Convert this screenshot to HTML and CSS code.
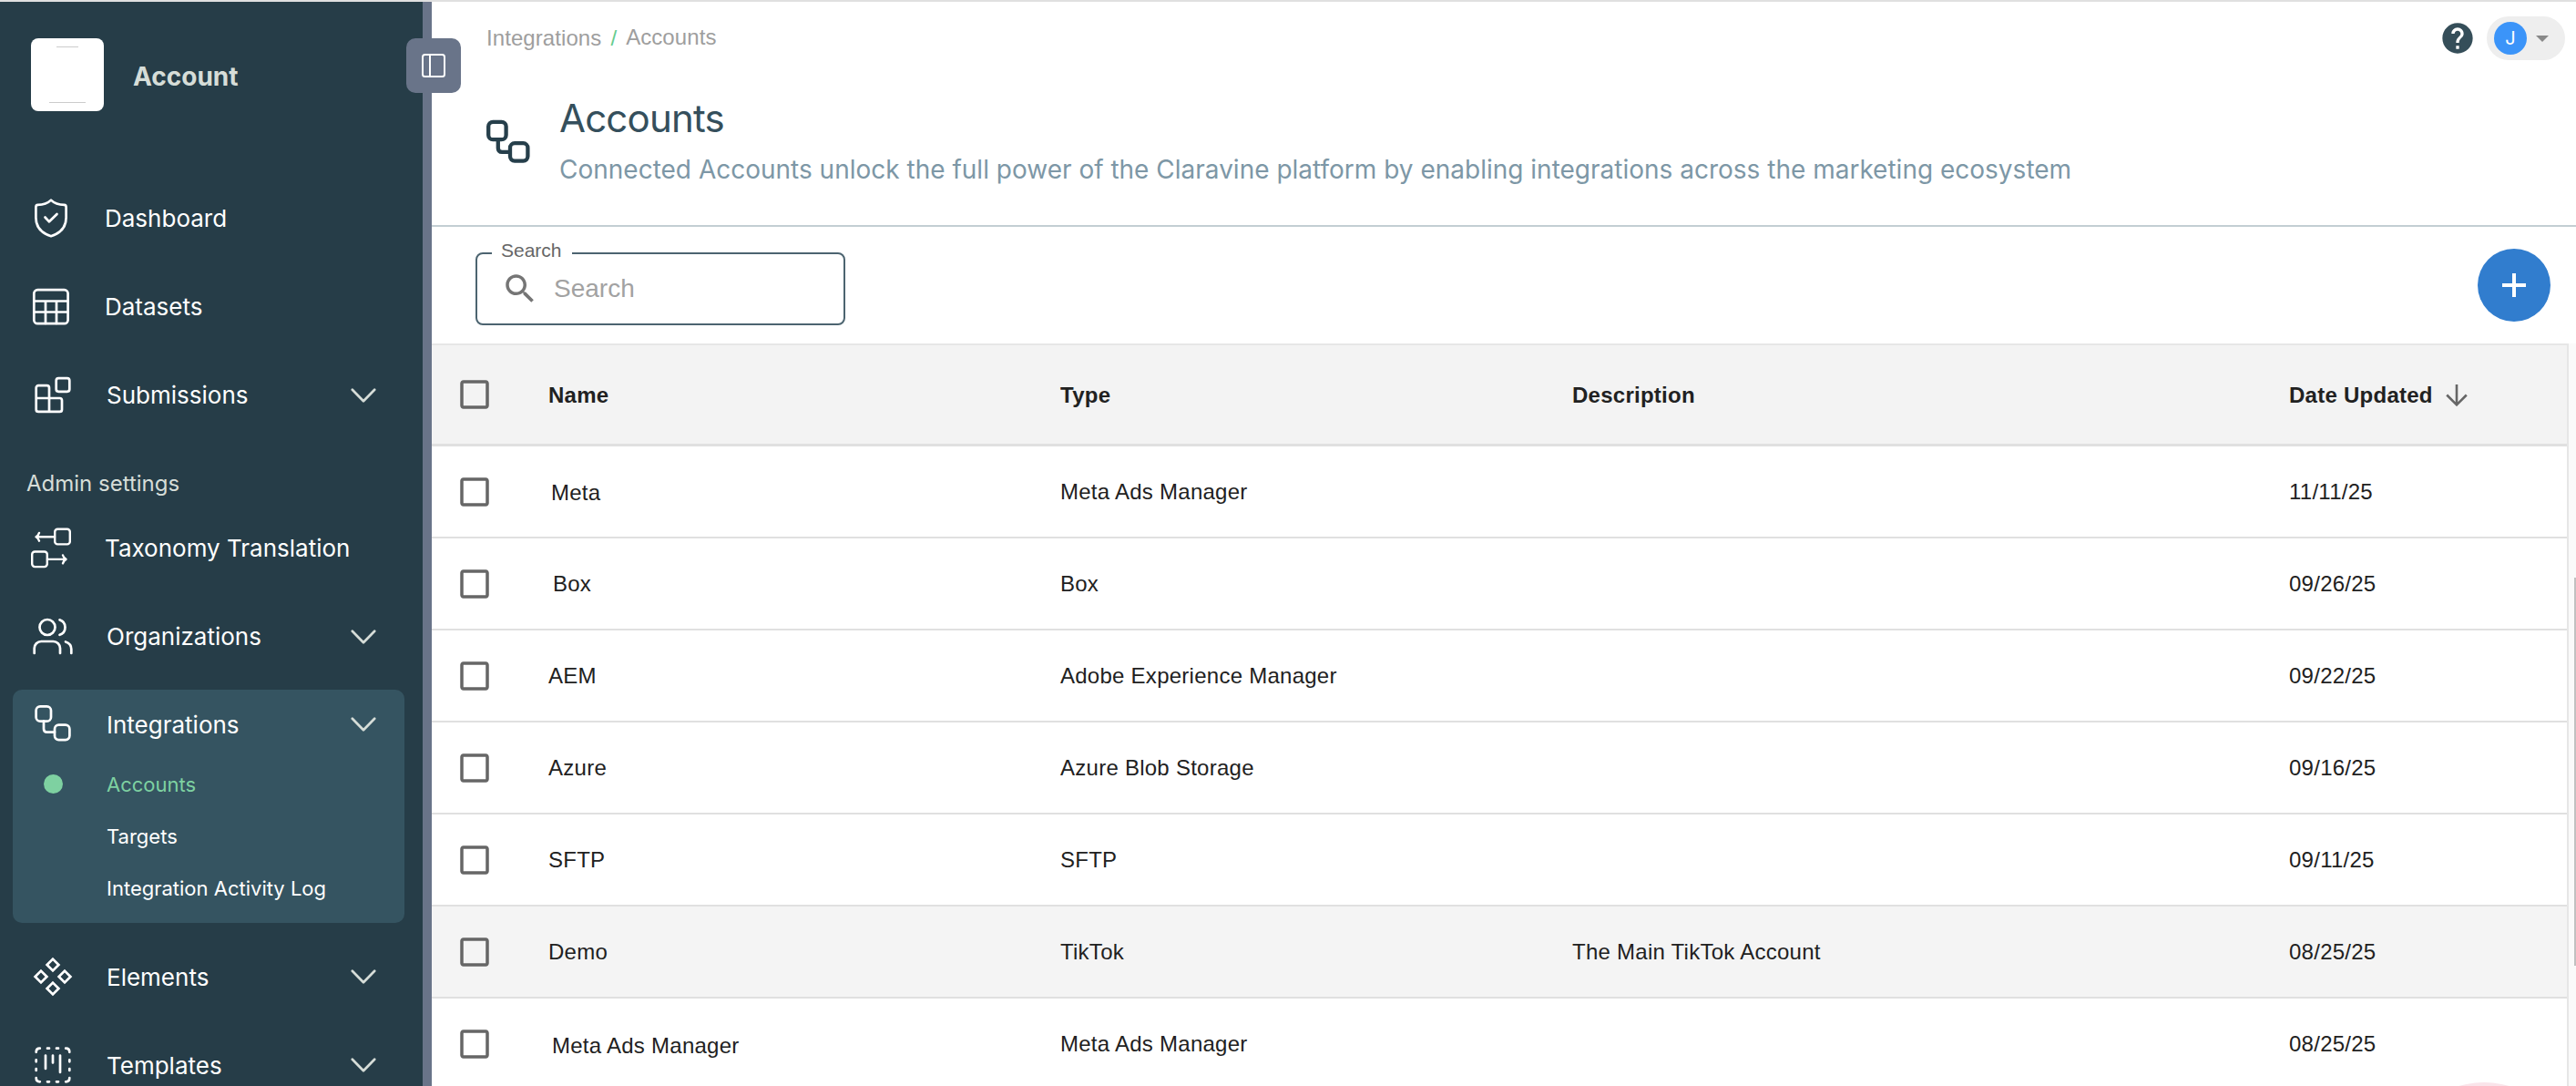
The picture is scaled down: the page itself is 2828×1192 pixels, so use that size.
FILE: index.html
```
<!DOCTYPE html>
<html lang="en">
<head>
<meta charset="utf-8">
<title>Accounts</title>
<meta name="viewport" content="width=device-width,initial-scale=1">
<link rel="stylesheet" href="styles.css">
</head>
<body>

<!-- shared icons -->
<svg class="defs" aria-hidden="true">
  <symbol id="chevron" viewBox="0 0 28 16"><path d="M1.8 1.8L14 14.2 26.2 1.8"/></symbol>
  <symbol id="box" viewBox="0 0 24 24"><path d="M19 5v14H5V5h14m0-2H5c-1.100 0-2 .9-2 2v14c0 1.100.9 2 2 2h14c1.100 0 2-.9 2-2V5c0-1.100-.9-2-2-2z"/></symbol>
</svg>

<div class="app">
  <aside class="sidebar">
    <div class="brand">
      <div class="logo"><span></span><span></span></div>
      <div class="brand-name">Account</div>
    </div>

    <nav>
      <a class="item">
        <svg class="ico" viewBox="0 0 48 48"><path d="M24 3.600C20.500 7 15.500 8.800 9.500 8.900Q7.400 9.100 7.400 11.200V23C7.400 33 14 40 24 43.200C34 40 40.600 33 40.600 23V11.200Q40.600 9.100 38.500 8.900C32.500 8.800 27.500 7 24 3.600Z"/><path d="M17.500 22.500L22 27.300 30.500 19"/></svg>
        <span>Dashboard</span>
      </a>
      <a class="item">
        <svg class="ico" viewBox="0 0 48 48"><rect x="5.300" y="5.200" width="37.300" height="37" rx="4"/><path d="M5.300 17.500H42.600M5.300 29.500H42.600M18 17.500V42M30 17.500V42"/></svg>
        <span>Datasets</span>
      </a>
      <a class="item sub">
        <svg class="ico" viewBox="0 0 48 48"><rect x="27.700" y="5.200" width="14.600" height="14.600" rx="2.500"/><path d="M5.700 27V15.700a2.500 2.500 0 0 1 2.500-2.500H17.500a2.500 2.500 0 0 1 2.500 2.500V42M5.700 27H31.500a2.500 2.500 0 0 1 2.500 2.500V39.400a2.500 2.500 0 0 1-2.500 2.500H8.200a2.500 2.500 0 0 1-2.500-2.500V27"/></svg>
        <span>Submissions</span>
        <svg class="chev"><use href="#chevron"/></svg>
      </a>

      <h2 class="section">Admin settings</h2>

      <a class="item">
        <svg class="ico thin" viewBox="0 0 48 48"><rect x="28.200" y="2.800" width="16.600" height="16.600" rx="3"/><path d="M28 11.300H8M11 6.900Q10 10 7.500 11.300Q10 12.600 11 15.700"/><rect x="3.200" y="27.500" width="16.600" height="16.600" rx="3"/><path d="M20 35.900H40M37 31.500Q38 34.600 40.500 35.900Q38 37.200 37 40.300"/></svg>
        <span>Taxonomy Translation</span>
      </a>
      <a class="item sub">
        <svg class="ico" viewBox="0 0 48 48"><circle cx="18" cy="13.500" r="8.500"/><path d="M31.500 5.400A8.600 8.600 0 0 1 31.500 21.800M3.700 42V36.500A7.500 7.500 0 0 1 11.200 29H24.500A7.500 7.500 0 0 1 32 36.500V42M38 29.500Q44.300 31.500 44.300 37.500V42"/></svg>
        <span>Organizations</span>
        <svg class="chev"><use href="#chevron"/></svg>
      </a>

      <div class="group">
        <a class="item sub">
          <svg class="ico" viewBox="0 0 48 48"><rect x="5.600" y="4.300" width="16.400" height="16.400" rx="4.500"/><rect x="26" y="24.700" width="16.400" height="16.400" rx="4.500"/><path d="M14 20.700V29Q14 32.600 17.600 32.600H26"/></svg>
          <span>Integrations</span>
          <svg class="chev"><use href="#chevron"/></svg>
        </a>
        <a class="child active"><i></i>Accounts</a>
        <a class="child"><i></i>Targets</a>
        <a class="child"><i></i>Integration Activity Log</a>
      </div>

      <a class="item sub">
        <svg class="ico sharp" viewBox="0 0 48 48"><path d="M24 4.600L30.400 11 24 17.400 17.600 11ZM11 17.600L17.400 24 11 30.400 4.600 24ZM37 17.600L43.400 24 37 30.400 30.600 24ZM24 30.600L30.400 37 24 43.400 17.600 37Z"/></svg>
        <span>Elements</span>
        <svg class="chev"><use href="#chevron"/></svg>
      </a>
      <a class="item sub">
        <svg class="ico" viewBox="0 0 48 48"><path d="M5.700 9.800Q5.700 5.700 9.800 5.700M38.200 5.700Q42.300 5.700 42.300 9.800M42.300 38.200Q42.300 42.300 38.200 42.300M9.800 42.300Q5.700 42.300 5.700 38.200M18 5.700h2M28 5.700h2M18 42.300h2M28 42.300h2M5.700 18.300v2M5.700 28v2M42.300 18.300v2M42.300 28v2M16 13.500V28M24 13.500V21.500M32 13.500V32"/></svg>
        <span>Templates</span>
        <svg class="chev"><use href="#chevron"/></svg>
      </a>
    </nav>

    <button class="toggle" aria-label="Toggle sidebar">
      <svg viewBox="0 0 26 26"><rect x="1" y="1" width="24" height="24" rx="2.500"/><path d="M9 1V25"/></svg>
    </button>
  </aside>

  <main>
    <header>
      <div class="topbar">
        <div class="crumbs"><span>Integrations</span><b>/</b><span class="here">Accounts</span></div>
        <svg class="help" viewBox="0 0 24 24"><path d="M12 2C6.480 2 2 6.480 2 12s4.480 10 10 10 10-4.480 10-10S17.520 2 12 2zm1 17h-2v-2h2v2zm2.070-7.750l-.9.920C13.450 12.900 13 13.500 13 15h-2v-.5c0-1.100.450-2.100 1.170-2.830l1.240-1.260c.370-.360.590-.860.590-1.410 0-1.100-.9-2-2-2s-2 .9-2 2H8c0-2.210 1.790-4 4-4s4 1.790 4 4c0 .880-.360 1.680-.930 2.250z"/></svg>
        <div class="user"><span class="avatar">J</span><span class="caret"></span></div>
      </div>
      <div class="heading">
        <svg viewBox="0 0 48 48"><rect x="2.200" y="2.800" width="19.400" height="19.400" rx="5"/><rect x="26" y="26.200" width="19.400" height="19.400" rx="5"/><path d="M12.800 22V31.500Q12.800 35.900 17.200 35.900H26"/></svg>
        <div>
          <h1>Accounts</h1>
          <p>Connected Accounts unlock the full power of the Claravine platform by enabling integrations across the marketing ecosystem</p>
        </div>
      </div>
    </header>

    <div class="toolbar">
      <fieldset class="search">
        <legend>Search</legend>
        <svg viewBox="0 0 24 24"><path d="M15.500 14h-.79l-.28-.27C15.410 12.590 16 11.110 16 9.500 16 5.910 13.090 3 9.500 3S3 5.910 3 9.500 5.910 16 9.500 16c1.610 0 3.090-.59 4.230-1.570l.27.28v.79l5 4.990L20.490 19l-4.990-5zm-6 0C7.010 14 5 11.990 5 9.500S7.010 5 9.500 5 14 7.010 14 9.500 11.990 14 9.500 14z"/></svg>
        <input type="text" placeholder="Search" aria-label="Search">
      </fieldset>
      <button class="fab" aria-label="Add account"><svg viewBox="0 0 26 26"><path d="M13 0V26M0 13H26"/></svg></button>
    </div>

    <div class="table-wrap">
      <div class="table">
        <div class="row head">
          <svg class="check"><use href="#box"/></svg><span>Name</span><span>Type</span><span>Description</span>
          <span class="sort">Date Updated <svg viewBox="0 0 24 24"><path d="M12 0V22M1.200 11.500L12 22.300 22.800 11.500"/></svg></span>
        </div>
        <div class="row"><svg class="check"><use href="#box"/></svg><span class="n1">Meta</span><span>Meta Ads Manager</span><span></span><span>11/11/25</span></div>
        <div class="row"><svg class="check"><use href="#box"/></svg><span class="n2">Box</span><span>Box</span><span></span><span>09/26/25</span></div>
        <div class="row"><svg class="check"><use href="#box"/></svg><span>AEM</span><span>Adobe Experience Manager</span><span></span><span>09/22/25</span></div>
        <div class="row"><svg class="check"><use href="#box"/></svg><span>Azure</span><span>Azure Blob Storage</span><span></span><span>09/16/25</span></div>
        <div class="row"><svg class="check"><use href="#box"/></svg><span>SFTP</span><span>SFTP</span><span></span><span>09/11/25</span></div>
        <div class="row hover"><svg class="check"><use href="#box"/></svg><span>Demo</span><span>TikTok</span><span>The Main TikTok Account</span><span>08/25/25</span></div>
        <div class="row"><svg class="check"><use href="#box"/></svg><span class="n3">Meta Ads Manager</span><span>Meta Ads Manager</span><span></span><span>08/25/25</span></div>
      </div>
      <div class="gutter"><div class="thumb"></div></div>
    </div>
  </main>
</div>

<div class="bubble"></div>
</body>
</html>
```
FILE: styles.css
```
:root{
  --side:#263d48;--side-active:#355461;--stripe:#697489;--soft:#d6ddd8;
  --green:#7ed1a1;--line:#e0e0e0;--text:#212121
}
*{box-sizing:border-box;margin:0}
body{height:100vh;overflow:hidden;position:relative;background:#fff;color:var(--text);font-family:"Liberation Sans",Arial,sans-serif;font-size:24px}
button{border:none;padding:0;cursor:pointer}
.defs{display:none}
.app{display:flex;height:100vh;overflow:hidden;border-top:2px solid var(--line)}

/* sidebar */
.sidebar{position:relative;flex:none;width:474px;background:var(--side);border-right:10px solid var(--stripe);font-family:Inter,sans-serif;color:#fff}
.brand{display:flex;align-items:flex-start;gap:32px;padding:40px 34px 0;height:189px}
.logo{width:80px;height:80px;border-radius:8px;background:#fff;display:flex;flex-direction:column;align-items:center;justify-content:space-between;padding:9px 0}
.logo span{width:24px;height:1px;background:#ccc}
.logo span+span{width:40px}
.brand-name{font-size:28px;font-weight:700;line-height:84px;color:var(--soft)}
.item{display:flex;align-items:center;height:97px;padding:0 51px 0 32px;font-size:26px}
.item.sub{padding-left:34px}
.item span{flex:1;margin-left:35px;white-space:nowrap}
.ico{width:48px;height:48px;fill:none;stroke:#fff;stroke-width:2.7;stroke-linecap:round;stroke-linejoin:round}
.ico.thin{stroke-width:2.4}
.ico.sharp{stroke-linejoin:miter}
.chev{width:28px;height:16px;fill:none;stroke:var(--soft);stroke-width:2.7;stroke-linecap:round;stroke-linejoin:round}
.section{height:71px;padding-left:29px;font-size:24px;font-weight:400;line-height:98px;color:var(--soft)}
.group{margin:10px 20px 10.5px 14px;padding:1px 0 10px;border-radius:10px;background:var(--side-active)}
.group .item{height:74px;padding:0 31px 0 20px}
.child{display:flex;align-items:center;height:57px;font-size:22px}
.child i{width:21px;height:21px;margin:0 48px 0 34px;border-radius:50%}
.child.active{color:var(--green)}
.child.active i{background:var(--green)}
.toggle{position:absolute;top:40px;right:-42px;width:60px;height:60px;border-radius:10px;background:var(--stripe);display:flex;align-items:center;justify-content:center}
.toggle svg{width:26px;height:26px;fill:none;stroke:#fff;stroke-width:2}

/* page header */
main{flex:1;display:flex;flex-direction:column;min-width:0}
header{height:247px;border-bottom:2px solid #c3ced3}
.topbar{display:flex;align-items:center;padding:16px 12px 0 60px}
.crumbs{flex:1;display:flex;color:#9e9e9e;line-height:48px;letter-spacing:.08px}
.crumbs b{margin:0 10px;font-weight:400;color:#66cc8f}
.crumbs .here{margin-top:-1px}
.help{width:40px;height:40px;margin-right:12px;fill:#354e59}
.user{display:flex;align-items:center;width:86px;height:48px;padding-left:8px;border-radius:24px;background:#eee}
.avatar{width:36px;height:36px;border-radius:50%;background:#3b94f9;color:#fff;font:20px/36px Inter,sans-serif;text-align:center}
.caret{margin-left:10px;border:7px solid transparent;border-top-color:#888;border-bottom:0}
.heading{display:flex;gap:32px;padding:34px 0 0 60px;font-family:Inter,sans-serif}
.heading svg{width:48px;height:48px;margin-top:31px;fill:none;stroke:#263f4b;stroke-width:4.3}
h1{font-size:42px;font-weight:400;line-height:60px;letter-spacing:-.8px;color:#354f5c}
p{font-size:28px;line-height:40px;margin-top:6px;color:#7d97a6;white-space:nowrap}

/* toolbar */
.toolbar{display:flex;justify-content:space-between;height:128px;padding:17px 28px 0 48px}
.search{display:flex;align-items:center;width:406px;height:91px;padding:0 0 11px 26px;border:2px solid #4c6470;border-radius:8px}
.search legend{margin-left:-10px;padding:0 11px 6px 10px;font-size:21px;line-height:18px;color:#666}
.search svg{width:42px;height:42px;margin-top:-1px;fill:#757575;flex:none}
.search input{border:none;outline:none;padding:0;margin-left:16px;width:280px;background:none;font:28px/40px "Liberation Sans",Arial,sans-serif}
.search input::placeholder{color:#a2a2a2}
.fab{width:80px;height:80px;margin-top:7px;border-radius:50%;background:#317dce;display:flex;align-items:center;justify-content:center}
.fab svg{width:26px;height:26px;stroke:#fff;stroke-width:4}

/* table */
.table-wrap{flex:1;display:flex;min-height:0;overflow:hidden}
.table{flex:1;border-top:2px solid #e6e6e6;border-right:2px solid #e6e6e6}
.row{display:grid;grid-template-columns:128px 562px 562px 787px 1fr;align-items:center;height:101px;border-bottom:2px solid var(--line);letter-spacing:.257px}
.row.hover{background:#f4f4f4}
.row.head{height:111px;border-bottom-width:3px;background:#f3f3f3;font-weight:700}
.head span{padding-top:2px}
.check{width:42px;height:42px;margin-left:26px;fill:#666}
.sort{display:flex;align-items:center}
.sort svg{width:24px;height:24px;margin-left:14px;fill:none;stroke:#666;stroke-width:2.6}
.n1{padding:2px 0 0 3px}
.n2{padding-left:5px}
.n3{padding:5px 0 0 4px}
.gutter{width:8px;background:#fafafa;display:flex;justify-content:flex-end}
.thumb{width:2px;height:426px;margin-top:257px;background:#c1c1c1}

/* floating widget peeking in from below */
.bubble{position:absolute;left:2629px;top:1188px;width:196px;height:196px;border-radius:50%;background:#fae4ea}
```
